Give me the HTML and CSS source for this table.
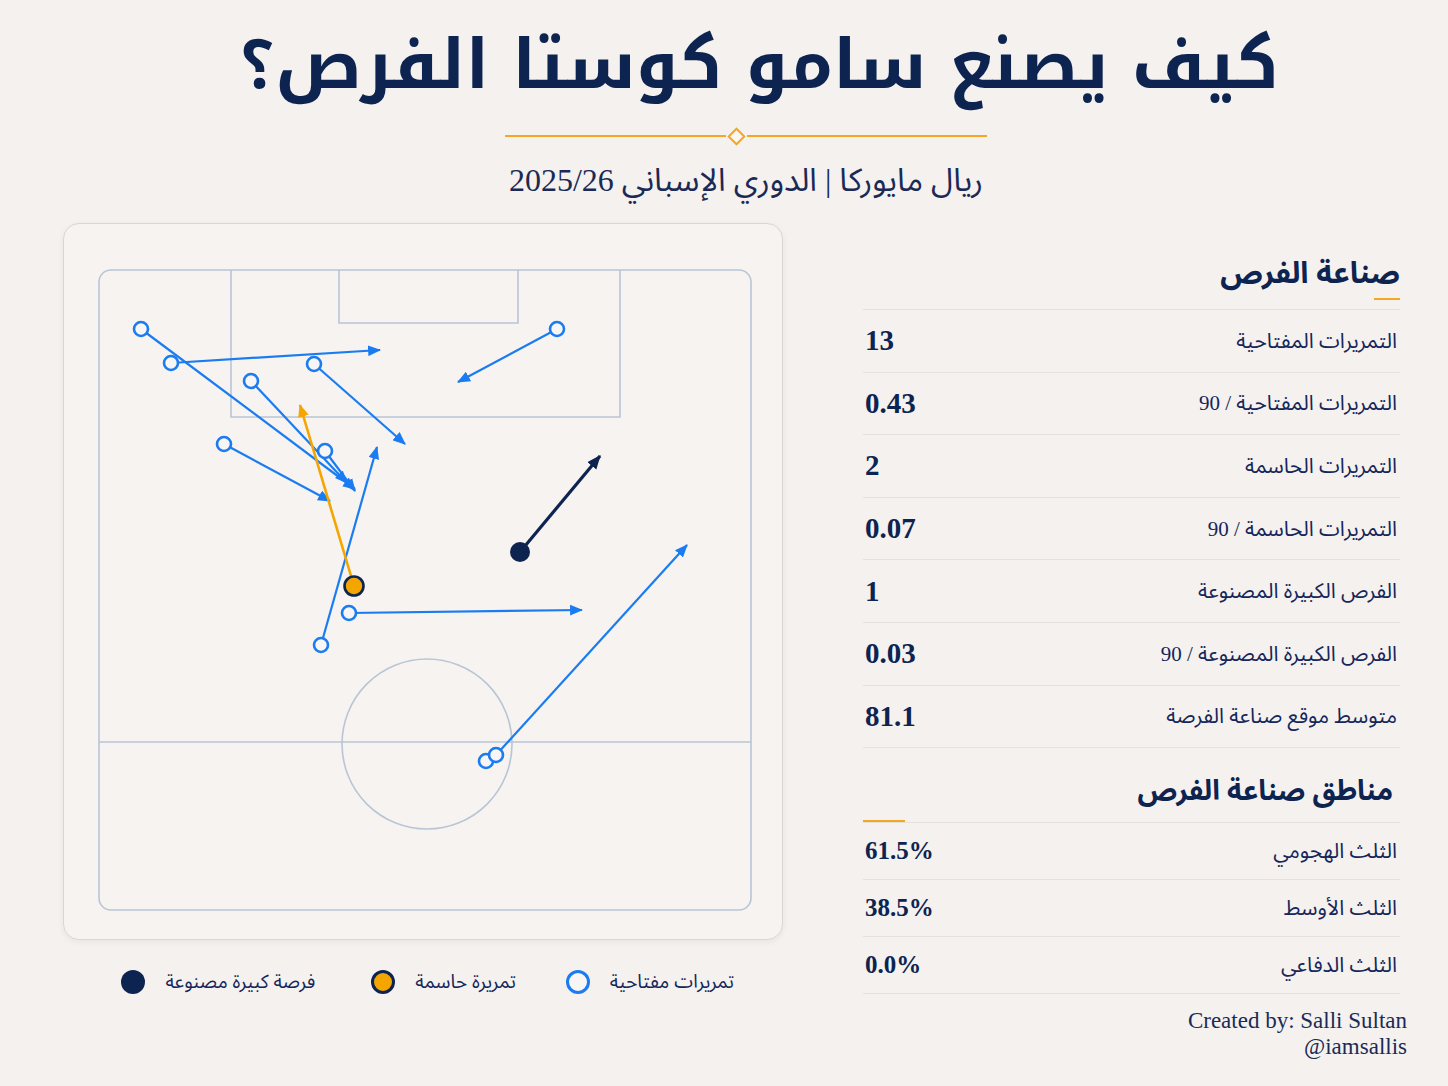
FILE: index.html
```html
<!DOCTYPE html>
<html lang="ar" dir="rtl">
<head>
<meta charset="utf-8">
<title>كيف يصنع سامو كوستا الفرص؟</title>
<link rel="stylesheet" href="styles.css">
</head>
<body>
<div class="page">
  <header class="header">
    <h1 class="title">كيف يصنع سامو كوستا الفرص؟</h1>
    <div class="divider"><span class="line"></span><span class="diamond"></span><span class="line"></span></div>
    <p class="subtitle">ريال مايوركا | الدوري الإسباني 2025/26</p>
  </header>

  <main class="main">
    <section class="stats">
      <h2 class="sec-title">صناعة الفرص</h2>
      <div class="accent accent-right"></div>
      <ul class="rows">
        <li class="row"><span class="label">التمريرات المفتاحية</span><span class="value">13</span></li>
        <li class="row"><span class="label">التمريرات المفتاحية / 90</span><span class="value">0.43</span></li>
        <li class="row"><span class="label">التمريرات الحاسمة</span><span class="value">2</span></li>
        <li class="row"><span class="label">التمريرات الحاسمة / 90</span><span class="value">0.07</span></li>
        <li class="row"><span class="label">الفرص الكبيرة المصنوعة</span><span class="value">1</span></li>
        <li class="row"><span class="label">الفرص الكبيرة المصنوعة / 90</span><span class="value">0.03</span></li>
        <li class="row"><span class="label">متوسط موقع صناعة الفرصة</span><span class="value">81.1</span></li>
      </ul>

      <h2 class="sec-title sec-title-2">مناطق صناعة الفرص</h2>
      <div class="accent accent-left"></div>
      <ul class="rows rows-zones">
        <li class="row"><span class="label">الثلث الهجومي</span><span class="value">61.5%</span></li>
        <li class="row"><span class="label">الثلث الأوسط</span><span class="value">38.5%</span></li>
        <li class="row"><span class="label">الثلث الدفاعي</span><span class="value">0.0%</span></li>
      </ul>

      <div class="credit" dir="ltr">
        <div>Created by: Salli Sultan</div>
        <div>@iamsallis</div>
      </div>
    </section>

    <section class="pitch-col">
      <div class="card">
        <svg class="pitch" viewBox="64 225 718 715" width="718" height="715" xmlns="http://www.w3.org/2000/svg">
          <defs>
            <marker id="ab" viewBox="0 0 12 10" refX="11" refY="5" markerWidth="13" markerHeight="11" markerUnits="userSpaceOnUse" orient="auto"><path d="M0,0 L12,5 L0,10 z" fill="#1a7cf0"/></marker>
            <marker id="ao" viewBox="0 0 12 10" refX="11" refY="5" markerWidth="13" markerHeight="11" markerUnits="userSpaceOnUse" orient="auto"><path d="M0,0 L12,5 L0,10 z" fill="#f5a500"/></marker>
            <marker id="an" viewBox="0 0 12 10" refX="11" refY="5" markerWidth="14" markerHeight="12" markerUnits="userSpaceOnUse" orient="auto"><path d="M0,0 L12,5 L0,10 z" fill="#0d2350"/></marker>
          </defs>
          <g class="lines" fill="none" stroke="#b9c5d6" stroke-width="1.6">
            <rect x="99" y="271" width="652" height="640" rx="12"/>
            <path d="M231 271 V418 H620 V271"/>
            <path d="M339 271 V324 H518 V271"/>
            <path d="M99 743 H751"/>
            <circle cx="427" cy="745" r="85"/>
          </g>
          <g stroke="#1a7cf0" stroke-width="2.2" marker-end="url(#ab)">
            <line x1="141" y1="330" x2="355" y2="490"/>
            <line x1="171" y1="364" x2="380" y2="351"/>
            <line x1="251" y1="382" x2="347" y2="484"/>
            <line x1="325" y1="452" x2="355" y2="492"/>
            <line x1="314" y1="365" x2="405" y2="445"/>
            <line x1="224" y1="445" x2="330" y2="502"/>
            <line x1="321" y1="646" x2="377" y2="448"/>
            <line x1="349" y1="614" x2="582" y2="611"/>
            <line x1="557" y1="330" x2="458" y2="383"/>
            <line x1="496" y1="756" x2="687" y2="546"/>
          </g>
          <line x1="354" y1="587" x2="300" y2="406" stroke="#f5a500" stroke-width="2.6" marker-end="url(#ao)"/>
          <line x1="520" y1="553" x2="600" y2="457" stroke="#0d2350" stroke-width="3.2" marker-end="url(#an)"/>
          <g fill="#f8f6f5" stroke="#1a7cf0" stroke-width="2.6">
            <circle cx="141" cy="330" r="7"/>
            <circle cx="171" cy="364" r="7"/>
            <circle cx="251" cy="382" r="7"/>
            <circle cx="314" cy="365" r="7"/>
            <circle cx="557" cy="330" r="7"/>
            <circle cx="224" cy="445" r="7"/>
            <circle cx="325" cy="452" r="7"/>
            <circle cx="349" cy="614" r="7"/>
            <circle cx="321" cy="646" r="7"/>
            <circle cx="486" cy="762" r="7"/>
            <circle cx="496" cy="756" r="7"/>
          </g>
          <circle cx="354" cy="587" r="9.5" fill="#f5a500" stroke="#0d2350" stroke-width="2.6"/>
          <circle cx="520" cy="553" r="10" fill="#0d2350"/>
        </svg>
      </div>
      <ul class="legend">
        <li class="legend-item"><span>تمريرات مفتاحية</span><i class="dot dot-key"></i></li>
        <li class="legend-item"><span>تمريرة حاسمة</span><i class="dot dot-assist"></i></li>
        <li class="legend-item"><span>فرصة كبيرة مصنوعة</span><i class="dot dot-big"></i></li>
      </ul>
    </section>
  </main>
</div>
</body>
</html>
```

FILE: styles.css
```css
* { box-sizing: border-box; }

html, body {
  margin: 0;
  padding: 0;
  background: #f4f1ef;
}

body {
  width: 1448px;
  height: 1086px;
  overflow: hidden;
  color: #0d2350;
  font-family: "Liberation Serif", "Noto Sans Arabic", "Noto Naskh Arabic", "DejaVu Sans", serif;
}

.page {
  width: 1448px;
}

.header {
  display: flex;
  flex-direction: column;
  align-items: center;
}

.title {
  margin: 10px 0 0 70px;
  font-family: "Noto Kufi Arabic", "Noto Sans Arabic", "DejaVu Sans", sans-serif;
  font-weight: 700;
  font-size: 68px;
  line-height: 112px;
  color: #0d2350;
}

.divider {
  display: flex;
  align-items: center;
  width: 482px;
  height: 16px;
  margin: 6px 0 0 44px;
}

.divider .line {
  height: 2px;
  background: #f5a623;
}

.divider .line:first-child {
  width: 240px;
}

.divider .line:last-child {
  flex: 1;
}

.divider .diamond {
  width: 13px;
  height: 13px;
  margin: 0 4px;
  border: 2.5px solid #f5a623;
  background: #f8f5f3;
  transform: rotate(45deg);
}

.subtitle {
  margin: 16px 0 0 44px;
  font-size: 32px;
  line-height: 40px;
  color: #1b2a55;
}

.main {
  display: flex;
  flex-direction: row;
  gap: 80px;
  padding-right: 48px;
  margin-top: 23px;
}

/* ---------- stats ---------- */
.stats {
  width: 537px;
  display: flex;
  flex-direction: column;
}

.sec-title {
  margin: 31px 0 0;
  font-family: "Noto Sans Arabic", "DejaVu Sans", sans-serif;
  font-weight: 700;
  font-size: 30px;
  line-height: 40px;
  color: #0d2350;
}

.sec-title-2 {
  margin-top: 24px;
  padding-right: 7px;
  font-size: 28px;
}

.accent {
  height: 2px;
  background: #f5a623;
}

.accent-right {
  width: 26px;
  margin-top: 4px;
  align-self: flex-start;
}

.accent-left {
  width: 42px;
  margin-top: 8px;
  align-self: flex-end;
}

.rows {
  list-style: none;
  margin: 9px 0 0;
  padding: 0;
  border-top: 1px solid #e7e1dc;
}

.rows-zones {
  margin-top: 0;
}

.row {
  display: flex;
  justify-content: space-between;
  align-items: center;
  height: 62.6px;
  border-bottom: 1px solid #e7e1dc;
  padding: 0 3px 0 2px;
}

.rows-zones .row {
  height: 57px;
}

.label {
  font-size: 21px;
  color: #15265a;
}

.value {
  font-family: "Liberation Serif", serif;
  font-weight: 700;
  font-size: 29px;
  color: #0d2350;
}

.rows-zones .value {
  font-size: 25px;
}

.credit {
  margin-top: 14px;
  margin-right: -7px;
  text-align: right;
  font-family: "Liberation Serif", serif;
  font-size: 23px;
  line-height: 26px;
  color: #1b2a55;
}

/* ---------- pitch ---------- */
.pitch-col {
  width: 720px;
  display: flex;
  flex-direction: column;
}

.card {
  width: 720px;
  height: 717px;
  background: #f6f3f1;
  border: 1px solid #dcd6d1;
  border-radius: 16px;
  box-shadow: 0 2px 6px rgba(60, 40, 20, 0.06);
  overflow: hidden;
}

.pitch {
  display: block;
}

.legend {
  list-style: none;
  margin: 29px 0 0;
  padding: 0 49px 0 0;
  display: flex;
  flex-direction: row;
  gap: 50px;
}

.legend-item {
  display: flex;
  align-items: center;
  gap: 20px;
  font-family: "Noto Sans Arabic", "DejaVu Sans", sans-serif;
  font-size: 19px;
  line-height: 26px;
  color: #15265a;
}

.legend-item:last-child {
  margin-right: 6px;
}

.dot {
  display: inline-block;
  width: 24px;
  height: 24px;
  border-radius: 50%;
}

.dot-key {
  border: 3px solid #1a7cf0;
  background: #f8f6f5;
}

.dot-assist {
  border: 3px solid #0d2350;
  background: #f5a500;
}

.dot-big {
  background: #0d2350;
}
```
